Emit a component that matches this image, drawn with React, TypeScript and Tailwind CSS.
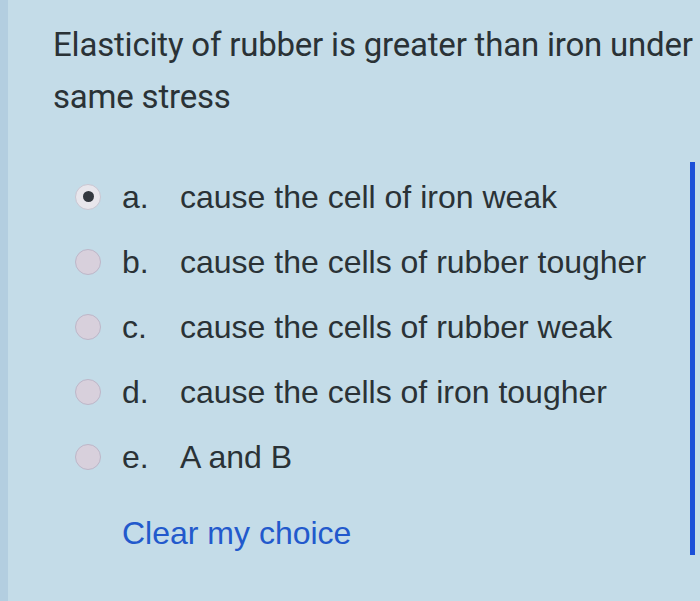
import React, { useState } from "react";

const options = [
  { key: "a", text: "cause the cell of iron weak" },
  { key: "b", text: "cause the cells of rubber tougher" },
  { key: "c", text: "cause the cells of rubber weak" },
  { key: "d", text: "cause the cells of iron tougher" },
  { key: "e", text: "A and B" },
];

export default function App() {
  const [picked, setPicked] = useState<string | null>("a");

  return (
    <div className="w-[700px] h-[601px] overflow-hidden bg-[#c4dce8] flex">
      <div className="w-[8px] bg-[#b3cee0]" />
      <div className="flex-1 flex flex-col pl-[45px] pt-[19px]">
        <h1 className="text-[33px] leading-[52px] text-[#2a3236] font-['Roboto',sans-serif] tracking-[-0.2px] whitespace-nowrap">
          Elasticity of rubber is greater than iron under
          <br />
          same stress
        </h1>
        <div className="flex mt-[41px]">
          <div className="flex-1 flex flex-col pl-[22px]">
            {options.map(o => (
              <label
                key={o.key}
                className="flex items-center h-[65px] cursor-pointer"
                onClick={() => setPicked(o.key)}
              >
                <span
                  className={
                    picked === o.key
                      ? "w-[26px] h-[26px] rounded-full bg-[#e8e6ec] border border-[#c9c6d2] flex items-center justify-center"
                      : "w-[26px] h-[26px] rounded-full bg-[#d8d0dc] border border-[#bdb6c8]"
                  }
                >
                  {picked === o.key && <span className="w-[11px] h-[11px] rounded-full bg-[#33383f]" />}
                </span>
                <span className="ml-[21px] w-[58px] text-[32px] text-[#2a3236] font-['Liberation_Sans',sans-serif]">
                  {o.key}.
                </span>
                <span className="text-[32px] text-[#2a3236] font-['Liberation_Sans',sans-serif] whitespace-nowrap">
                  {o.text}
                </span>
              </label>
            ))}
            <button
              className="self-start mt-[20px] ml-[47px] text-[32px] text-[#2259cc] font-['Liberation_Sans',sans-serif]"
              onClick={() => setPicked(null)}
            >
              Clear my choice
            </button>
          </div>
          <div className="w-[5px] h-[393px] bg-[#1b4fd8] mr-[5px] mt-[-2px]" />
        </div>
      </div>
    </div>
  );
}
